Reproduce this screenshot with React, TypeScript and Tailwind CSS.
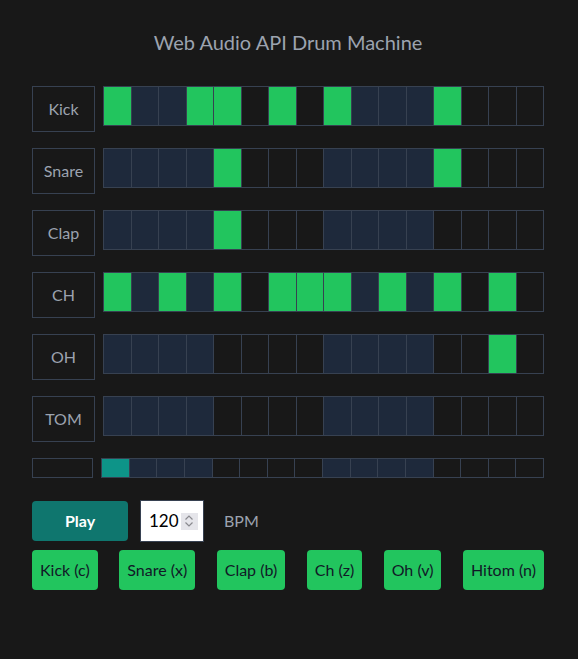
import React from "react";

const tracks: { name: string; on: number[] }[] = [
  { name: "Kick", on: [0, 3, 4, 6, 8, 12] },
  { name: "Snare", on: [4, 12] },
  { name: "Clap", on: [4] },
  { name: "CH", on: [0, 2, 4, 6, 7, 8, 10, 12, 14] },
  { name: "OH", on: [14] },
  { name: "TOM", on: [] },
];

const pads = ["Kick (c)", "Snare (x)", "Clap (b)", "Ch (z)", "Oh (v)", "Hitom (n)"];

// beats 1 and 3 get the navy tint
const offBeat = (i: number) => (Math.floor(i / 4) % 2 === 0 ? "bg-[#1e293b]" : "bg-[#181818]");

const Steps = ({ on, active, tall }: { on: number[]; active: string; tall: boolean }) => (
  <div
    className={`flex-1 grid grid-cols-16 gap-px bg-[#374151] border border-[#374151] ${tall ? "h-10" : "h-5"}`}
  >
    {Array.from({ length: 16 }).map((_, i) => (
      <div key={i} className={on.includes(i) ? active : offBeat(i)} />
    ))}
  </div>
);

export default function App() {
  return (
    <div className="min-h-screen bg-[#181818] font-['Lato','Noto_Sans',sans-serif]">
      <div className="w-[512px] ml-8 pt-[28px]">
        <h1 className="text-center text-[20px] leading-7 text-[#9ca3af] mb-[30px]">
          Web Audio API Drum Machine
        </h1>

        {tracks.map((t) => (
          <div key={t.name} className="flex items-start gap-2 mb-4">
            <div className="w-[63px] h-[46px] border border-[#374151] flex items-center justify-center text-base text-[#9ca3af]">
              {t.name}
            </div>
            <Steps on={t.on} active="bg-[#22c55e]" tall />
          </div>
        ))}

        {/* step position */}
        <div className="flex items-start gap-2">
          <div className="w-[61px] h-5 border border-[#374151]" />
          <Steps on={[0]} active="bg-[#0d9488]" tall={false} />
        </div>

        <div className="flex items-center mt-[22px]">
          <button className="w-24 h-10 rounded bg-[#0f766e] text-white font-bold text-base">
            Play
          </button>
          <div className="ml-3 w-16 h-[42px] bg-white border border-[#374151] flex items-center pl-2 gap-0.5">
            <span className="text-[17px] text-black">120</span>
            <span className="w-[17px] h-[17px] bg-[#e5e5ea] flex items-center justify-center">
              <svg width="10" height="14" viewBox="0 0 10 14" fill="none" stroke="#8a8a8f" strokeWidth="1.2">
                <path d="M1.5 5.5 L5 2 L8.5 5.5" />
                <path d="M1.5 8.5 L5 12 L8.5 8.5" />
              </svg>
            </span>
          </div>
          <span className="ml-5 text-base text-[#9ca3af]">BPM</span>
        </div>

        <div className="flex justify-between mt-2">
          {pads.map((p) => (
            <button key={p} className="h-10 px-2 rounded bg-[#22c55e] text-[#111827] text-base">
              {p}
            </button>
          ))}
        </div>
      </div>
    </div>
  );
}
